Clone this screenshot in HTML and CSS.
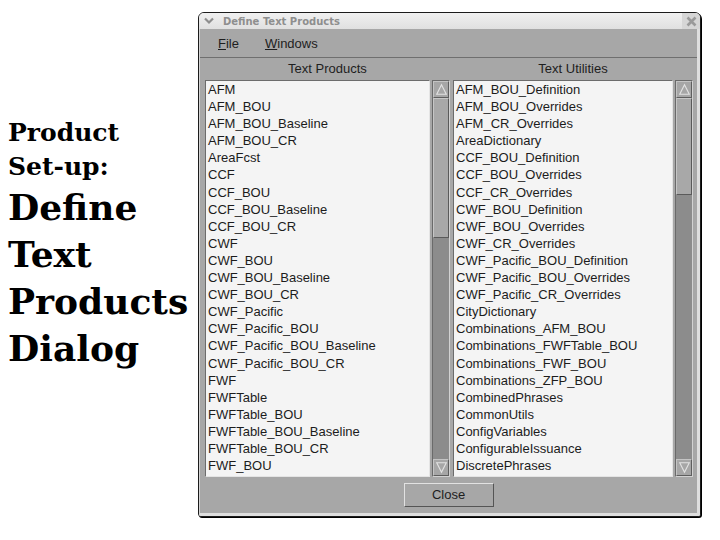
FILE: index.html
```html
<!DOCTYPE html>
<html>
<head>
<meta charset="utf-8">
<link rel="stylesheet" href="styles.css">
</head>
<body>
<div class="page">
  <div class="caption">
    <div class="small">Product</div>
    <div class="small">Set-up:</div>
    <div class="big">Define</div>
    <div class="big">Text</div>
    <div class="big">Products</div>
    <div class="big">Dialog</div>
  </div>
  <div class="window">
    <div class="titlebar">
      <svg class="chev" width="10" height="8" viewBox="0 0 10 8"><path d="M1 1.5 L5 5.5 L9 1.5" fill="none" stroke="#8e8e8e" stroke-width="2.2"/></svg>
      <span class="title">Define Text Products</span>
      <span class="closebox"><svg width="11" height="11" viewBox="0 0 11 11"><path d="M1.5 1.5 L9.5 9.5 M9.5 1.5 L1.5 9.5" stroke="#9a9a9a" stroke-width="2.6"/></svg></span>
    </div>
    <div class="wbody">
      <div class="menubar">
        <span class="menu"><span class="ul">F</span>ile</span>
        <span class="menu"><span class="ul">W</span>indows</span>
      </div>
      <div class="panels">
        <div class="panel left">
          <div class="header">Text Products</div>
          <div class="listwrap">
            <div class="list">
              <div class="row">AFM</div>
              <div class="row">AFM_BOU</div>
              <div class="row">AFM_BOU_Baseline</div>
              <div class="row">AFM_BOU_CR</div>
              <div class="row">AreaFcst</div>
              <div class="row">CCF</div>
              <div class="row">CCF_BOU</div>
              <div class="row">CCF_BOU_Baseline</div>
              <div class="row">CCF_BOU_CR</div>
              <div class="row">CWF</div>
              <div class="row">CWF_BOU</div>
              <div class="row">CWF_BOU_Baseline</div>
              <div class="row">CWF_BOU_CR</div>
              <div class="row">CWF_Pacific</div>
              <div class="row">CWF_Pacific_BOU</div>
              <div class="row">CWF_Pacific_BOU_Baseline</div>
              <div class="row">CWF_Pacific_BOU_CR</div>
              <div class="row">FWF</div>
              <div class="row">FWFTable</div>
              <div class="row">FWFTable_BOU</div>
              <div class="row">FWFTable_BOU_Baseline</div>
              <div class="row">FWFTable_BOU_CR</div>
              <div class="row">FWF_BOU</div>
            </div>
            <div class="scrollbar">
              <div class="arrow up"><svg width="15" height="15" viewBox="0 0 15 15"><path d="M7.5 2 L13 13 L2 13 Z" fill="none" stroke="#e2e2e2" stroke-width="1.3"/></svg></div>
              <div class="track"><div class="thumb thumb-left"></div></div>
              <div class="arrow down"><svg width="15" height="15" viewBox="0 0 15 15"><path d="M2 2 L13 2 L7.5 13 Z" fill="none" stroke="#e2e2e2" stroke-width="1.3"/></svg></div>
            </div>
          </div>
        </div>
        <div class="panel right">
          <div class="header">Text Utilities</div>
          <div class="listwrap">
            <div class="list">
              <div class="row">AFM_BOU_Definition</div>
              <div class="row">AFM_BOU_Overrides</div>
              <div class="row">AFM_CR_Overrides</div>
              <div class="row">AreaDictionary</div>
              <div class="row">CCF_BOU_Definition</div>
              <div class="row">CCF_BOU_Overrides</div>
              <div class="row">CCF_CR_Overrides</div>
              <div class="row">CWF_BOU_Definition</div>
              <div class="row">CWF_BOU_Overrides</div>
              <div class="row">CWF_CR_Overrides</div>
              <div class="row">CWF_Pacific_BOU_Definition</div>
              <div class="row">CWF_Pacific_BOU_Overrides</div>
              <div class="row">CWF_Pacific_CR_Overrides</div>
              <div class="row">CityDictionary</div>
              <div class="row">Combinations_AFM_BOU</div>
              <div class="row">Combinations_FWFTable_BOU</div>
              <div class="row">Combinations_FWF_BOU</div>
              <div class="row">Combinations_ZFP_BOU</div>
              <div class="row">CombinedPhrases</div>
              <div class="row">CommonUtils</div>
              <div class="row">ConfigVariables</div>
              <div class="row">ConfigurableIssuance</div>
              <div class="row">DiscretePhrases</div>
            </div>
            <div class="scrollbar">
              <div class="arrow up"><svg width="15" height="15" viewBox="0 0 15 15"><path d="M7.5 2 L13 13 L2 13 Z" fill="none" stroke="#e2e2e2" stroke-width="1.3"/></svg></div>
              <div class="track"><div class="thumb thumb-right"></div></div>
              <div class="arrow down"><svg width="15" height="15" viewBox="0 0 15 15"><path d="M2 2 L13 2 L7.5 13 Z" fill="none" stroke="#e2e2e2" stroke-width="1.3"/></svg></div>
            </div>
          </div>
        </div>
      </div>
      <div class="footer">
        <div class="btn">Close</div>
      </div>
    </div>
  </div>
</div>
</body>
</html>
```

FILE: styles.css
```css
html, body {
  margin: 0;
  padding: 0;
  background: #ffffff;
}

.page {
  display: flex;
  align-items: flex-start;
  padding-top: 12px;
  height: 528px;
}

.caption {
  width: 190px;
  padding-left: 8px;
  margin-top: 104px;
  font-family: "DejaVu Serif", "Liberation Serif", serif;
  font-weight: bold;
  color: #000;
}

.small {
  font-size: 25px;
  line-height: 34px;
  height: 34px;
}

.big {
  font-size: 36px;
  line-height: 47px;
  height: 47px;
}

.window {
  width: 501px;
  height: 503px;
  border: 1px solid #1c1c1c;
  border-radius: 6px 6px 3px 3px;
  box-shadow: 1px 1px 0 #000;
  background: #e6e6e6;
  display: flex;
  flex-direction: column;
  overflow: hidden;
  font-family: "Liberation Sans", Arial, sans-serif;
}

.titlebar {
  height: 16px;
  display: flex;
  align-items: center;
  background: linear-gradient(#f0f0f0, #e0e0e0);
}

.chev {
  margin-left: 5px;
  margin-right: 9px;
}

.title {
  font-family: "DejaVu Sans", sans-serif;
  font-weight: bold;
  font-size: 10px;
  color: #8e8e8e;
}

.closebox {
  margin-left: auto;
  width: 18px;
  height: 16px;
  background: #d6d6d6;
  display: flex;
  align-items: center;
  justify-content: center;
}

.wbody {
  flex: 1;
  background: #a7a7a7;
  border-left: 1px solid #d4d4d4;
  border-right: 3px solid #dedede;
  border-bottom: 3px solid #dedede;
  display: flex;
  flex-direction: column;
}

.menubar {
  height: 28px;
  border-bottom: 1px solid #6f6f6f;
  display: flex;
  align-items: center;
  font-size: 13px;
  color: #1e1e1e;
  padding-left: 18px;
  gap: 26px;
}

.ul {
  text-decoration: underline;
}

.panels {
  display: grid;
  grid-template-columns: 245px 240px;
  column-gap: 3px;
  padding-left: 5px;
}

.header {
  height: 22px;
  line-height: 21px;
  text-align: center;
  font-size: 13px;
  color: #1e1e1e;
}

.listwrap {
  display: flex;
  height: 397px;
  gap: 2px;
}

.list {
  flex: 1;
  background: #f4f4f4;
  border-top: 1px solid #6c6c6c;
  border-left: 1px solid #6c6c6c;
  border-right: 1px solid #e4e4e4;
  border-bottom: 1px solid #e4e4e4;
  padding-left: 2px;
  font-size: 13px;
  color: #1c1c1c;
  overflow: hidden;
}

.row {
  height: 17.1px;
  line-height: 17px;
  white-space: nowrap;
}

.scrollbar {
  width: 16px;
  display: flex;
  flex-direction: column;
  background: #8c8c8c;
  border-top: 1px solid #6a6a6a;
  border-left: 1px solid #6a6a6a;
  border-right: 1px solid #d2d2d2;
  border-bottom: 1px solid #d2d2d2;
}

.arrow {
  height: 15px;
  background: #a6a6a6;
  border-top: 1px solid #c4c4c4;
  border-left: 1px solid #c4c4c4;
  border-right: 1px solid #5e5e5e;
  border-bottom: 1px solid #5e5e5e;
  display: flex;
  align-items: center;
  justify-content: center;
}

.arrow svg {
  width: 13px;
  height: 13px;
}

.track {
  flex: 1;
}

.thumb {
  background: #a8a8a8;
  border-top: 1px solid #c6c6c6;
  border-left: 1px solid #c6c6c6;
  border-right: 1px solid #5a5a5a;
  border-bottom: 1px solid #5a5a5a;
}

.thumb-left {
  height: 138px;
}

.thumb-right {
  height: 95px;
}

.footer {
  flex: 1;
  display: flex;
  justify-content: center;
  padding-top: 6px;
}

.btn {
  width: 88px;
  height: 22px;
  line-height: 22px;
  text-align: center;
  font-size: 13px;
  color: #1e1e1e;
  background: #a7a7a7;
  border-top: 1px solid #e2e2e2;
  border-left: 1px solid #e2e2e2;
  border-right: 1px solid #555555;
  border-bottom: 1px solid #555555;
}
```
